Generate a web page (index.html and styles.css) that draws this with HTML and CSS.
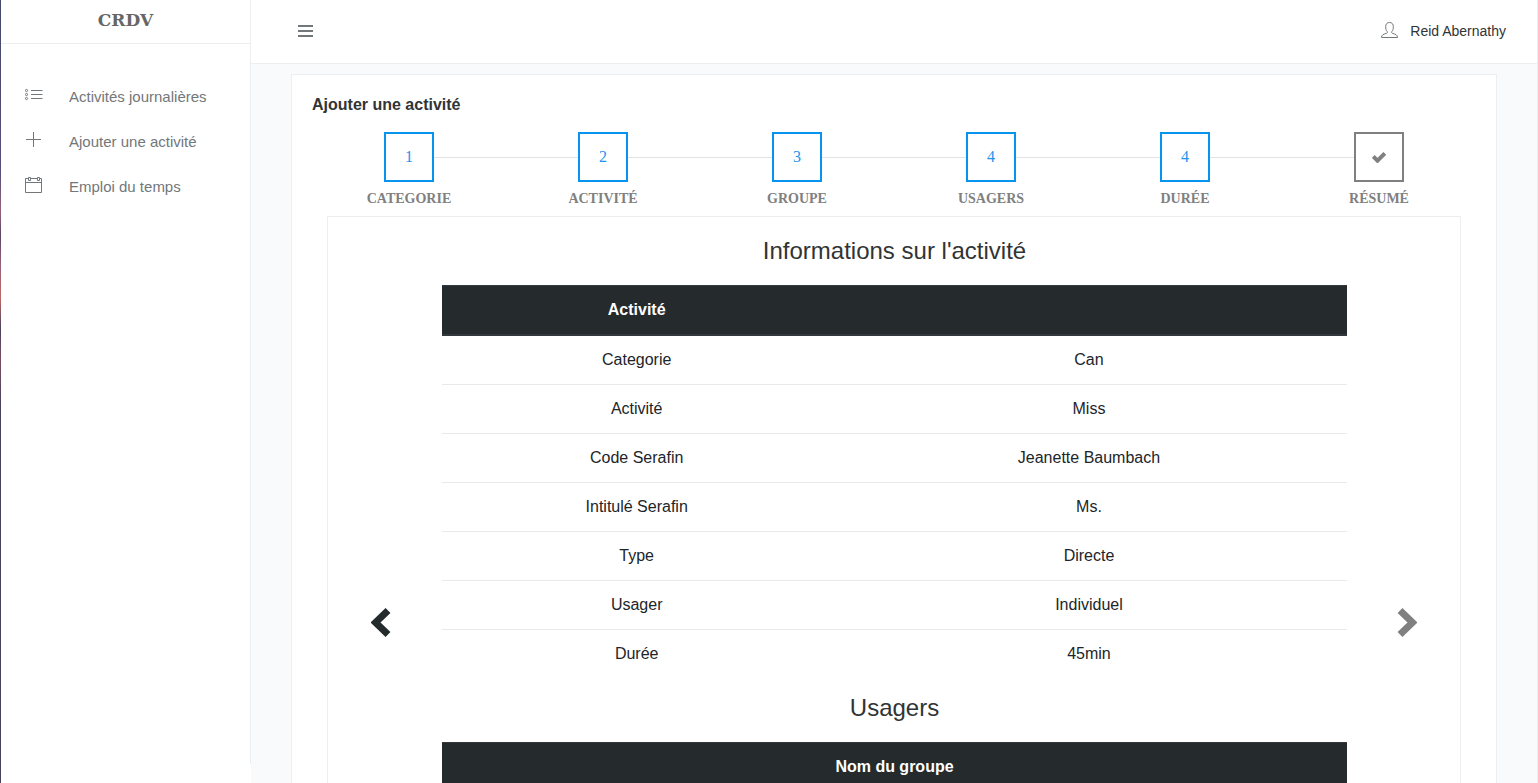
FILE: index.html
```html
<!DOCTYPE html>
<html lang="fr">
<head>
<meta charset="utf-8">
<title>Ajouter une activité</title>
<link rel="stylesheet" href="styles.css">
</head>
<body>
<div class="app">
  <aside class="sidebar">
    <a class="logo" href="#">CRDV</a>
    <nav class="menu">
      <a class="menu-item" href="#">
        <svg class="menu-icon" viewBox="0 0 18 18"><path d="M6 4.500h11.500M6 8.500h11.500M6 12.500h11.500"/><circle cx="1.500" cy="4.500" r="1.100"/><circle cx="1.500" cy="8.500" r="1.100"/><circle cx="1.500" cy="12.500" r="1.100"/></svg>
        <span>Activités journalières</span>
      </a>
      <a class="menu-item" href="#">
        <svg class="menu-icon" viewBox="0 0 18 18"><path d="M1 8.500h15M8.500 1v15"/></svg>
        <span>Ajouter une activité</span>
      </a>
      <a class="menu-item" href="#">
        <svg class="menu-icon" viewBox="0 0 18 18"><path d="M3 2.500H.5v14h16v-14H15M6 2.500h6M.5 6.500h16M3.500 1.500h2v3h-2zM12.500 1.500h2v3h-2z"/></svg>
        <span>Emploi du temps</span>
      </a>
    </nav>
  </aside>
  <div class="page">
    <header class="topbar">
      <button class="toggle" type="button" aria-label="Menu">
        <svg viewBox="0 0 15 12"><path d="M0 1h15M0 6h15M0 11h15"/></svg>
      </button>
      <a class="user" href="#">
        <svg class="user-icon" viewBox="0 0 17 17"><path d="M.5 15.500C.5 12.800 2.500 12.300 5.800 11.200c.8-.3.8-1.300.2-1.900C4.900 8.200 4.700 6.800 4.700 4.700 4.700 2 6 .5 8.500.5s3.800 1.500 3.800 4.200c0 2.100-.2 3.500-1.300 4.600-.6.600-.6 1.600.2 1.900 3.300 1.100 5.300 1.600 5.300 4.300z"/></svg>
        <span>Reid Abernathy</span>
      </a>
    </header>
    <main class="content">
      <section class="card">
        <h1 class="card-title">Ajouter une activité</h1>
        <ol class="steps">
          <li class="step"><span class="step-box">1</span><span class="step-label">CATEGORIE</span></li>
          <li class="step"><span class="step-box">2</span><span class="step-label">ACTIVITÉ</span></li>
          <li class="step"><span class="step-box">3</span><span class="step-label">GROUPE</span></li>
          <li class="step"><span class="step-box">4</span><span class="step-label">USAGERS</span></li>
          <li class="step"><span class="step-box">4</span><span class="step-label">DURÉE</span></li>
          <li class="step"><span class="step-box step-box-current"><svg class="check" viewBox="0 0 14 12"><path d="M1.200 5.500l4.300 4.200 7.300-7.300"/></svg></span><span class="step-label">RÉSUMÉ</span></li>
        </ol>
        <div class="panel">
          <button class="arrow arrow-prev" type="button" aria-label="Précédent">
            <svg viewBox="0 0 20 30"><path d="M17 3.500L4.500 15.500 17 27.500"/></svg>
          </button>
          <div class="summary">
            <h2 class="summary-title">Informations sur l'activité</h2>
            <table class="table">
              <thead><tr><th class="label-col">Activité</th><th></th></tr></thead>
              <tbody>
                <tr><td>Categorie</td><td>Can</td></tr>
                <tr><td>Activité</td><td>Miss</td></tr>
                <tr><td>Code Serafin</td><td>Jeanette Baumbach</td></tr>
                <tr><td>Intitulé Serafin</td><td>Ms.</td></tr>
                <tr><td>Type</td><td>Directe</td></tr>
                <tr><td>Usager</td><td>Individuel</td></tr>
                <tr><td>Durée</td><td>45min</td></tr>
              </tbody>
            </table>
            <h2 class="summary-title">Usagers</h2>
            <table class="table">
              <thead><tr><th>Nom du groupe</th></tr></thead>
            </table>
          </div>
          <button class="arrow arrow-next" type="button" aria-label="Suivant">
            <svg viewBox="0 0 20 30"><path d="M3 3.500l12.500 12L3 27.500"/></svg>
          </button>
        </div>
      </section>
    </main>
  </div>
</div>
</body>
</html>
```
FILE: styles.css
```css
* { box-sizing: border-box; }
body {
  margin: 0;
  background: #fff;
  color: #212529;
  font-family: "Liberation Sans", Arial, sans-serif;
  font-size: 16px;
  line-height: 24px;
}
a { color: inherit; text-decoration: none; }
button { border: 0; padding: 0; background: none; cursor: pointer; }
svg { display: block; fill: none; stroke: currentColor; }

.app {
  display: flex;
  height: 100vh;
  overflow: hidden;
  border-right: 1px solid #eceef0;
}
.app::before {
  content: "";
  flex: none;
  width: 1px;
  background: linear-gradient(#47476b 0%, #55507a 22%, #96607a 27%, #5c4666 30%, #96607a 34%, #bd6a64 38%, #4a4260 42%, #7a4d62 46%, #47415e 52%, #47415e 100%);
}

.sidebar {
  flex: none;
  width: 250px;
  margin-bottom: 19px;
  border-right: 1px solid #eceef0;
}
.logo {
  display: block;
  height: 44px;
  border-bottom: 1px solid #eceef0;
  color: #666;
  font-family: "DejaVu Serif", serif;
  font-size: 17px;
  font-weight: 700;
  line-height: 40px;
  text-align: center;
}
.menu { padding: 30px 24px; }
.menu-item {
  display: flex;
  align-items: center;
  gap: 26px;
  height: 45px;
  color: #72777a;
  font-size: 15px;
}
.menu-icon { width: 18px; height: 18px; margin-bottom: 4px; }

.page {
  flex: 1;
  min-width: 0;
  background: #f9fafc;
}
.topbar {
  display: flex;
  align-items: center;
  justify-content: space-between;
  height: 64px;
  padding: 0 31px 2px 47px;
  border-bottom: 1px solid #eceef0;
  background: #fff;
}
.toggle { color: #72777a; }
.toggle svg { width: 15px; height: 12px; stroke-width: 2; }
.user {
  display: flex;
  align-items: center;
  gap: 12px;
  color: #313435;
  font-size: 14px;
}
.user-icon { width: 17px; height: 17px; color: #72777a; }

.content { padding: 10px 40px; }
.card {
  padding: 20px;
  border: 1px solid #eceef0;
  background: #fff;
}
.card-title {
  margin: 0 0 17px;
  color: #313435;
  font-size: 16px;
  line-height: 20px;
}

.steps {
  display: flex;
  margin: 0 0 8px;
  padding: 0;
  list-style: none;
  font-family: "Liberation Serif", "Times New Roman", serif;
}
.step {
  position: relative;
  flex: 1;
  display: flex;
  flex-direction: column;
  align-items: center;
  gap: 8px;
}
.step + .step::before {
  content: "";
  position: absolute;
  top: 25px;
  right: 50%;
  width: 100%;
  height: 1px;
  background: #e3e3e3;
}
.step-box {
  position: relative;
  z-index: 1;
  display: flex;
  align-items: center;
  justify-content: center;
  width: 50px;
  height: 50px;
  border: 2px solid #0794ef;
  background: #fff;
  color: #2494ef;
}
.step-box-current { border-color: #808080; color: #808080; }
.check { width: 14px; height: 12px; stroke-width: 4; }
.step-label {
  color: #808080;
  font-size: 14px;
  font-weight: 700;
  line-height: 18px;
}

.panel {
  display: grid;
  grid-template-columns: 1fr 8fr 1fr;
  min-height: 812px;
  margin: 0 15px;
  border: 1px solid #eceef0;
}
.arrow { display: flex; align-items: center; justify-content: center; }
.arrow svg { width: 20px; height: 30px; stroke-width: 7; }
.arrow-prev { padding-right: 8px; color: #252a2c; }
.arrow-next { padding-left: 8px; color: #808080; }

.summary { padding: 4px 0 0 1px; }
.summary-title {
  margin: 12px 0 16px;
  color: #313435;
  font-size: 24px;
  font-weight: 400;
  line-height: 36px;
  text-align: center;
}
.table {
  width: 100%;
  border-collapse: collapse;
  text-align: center;
}
.table th,
.table td { padding: 12px; border-top: 1px solid #e7e9eb; }
.table th {
  border-top-color: #32383e;
  border-bottom: 2px solid #32383e;
  background: #252a2c;
  color: #fff;
}
.label-col { width: 43%; }
```
